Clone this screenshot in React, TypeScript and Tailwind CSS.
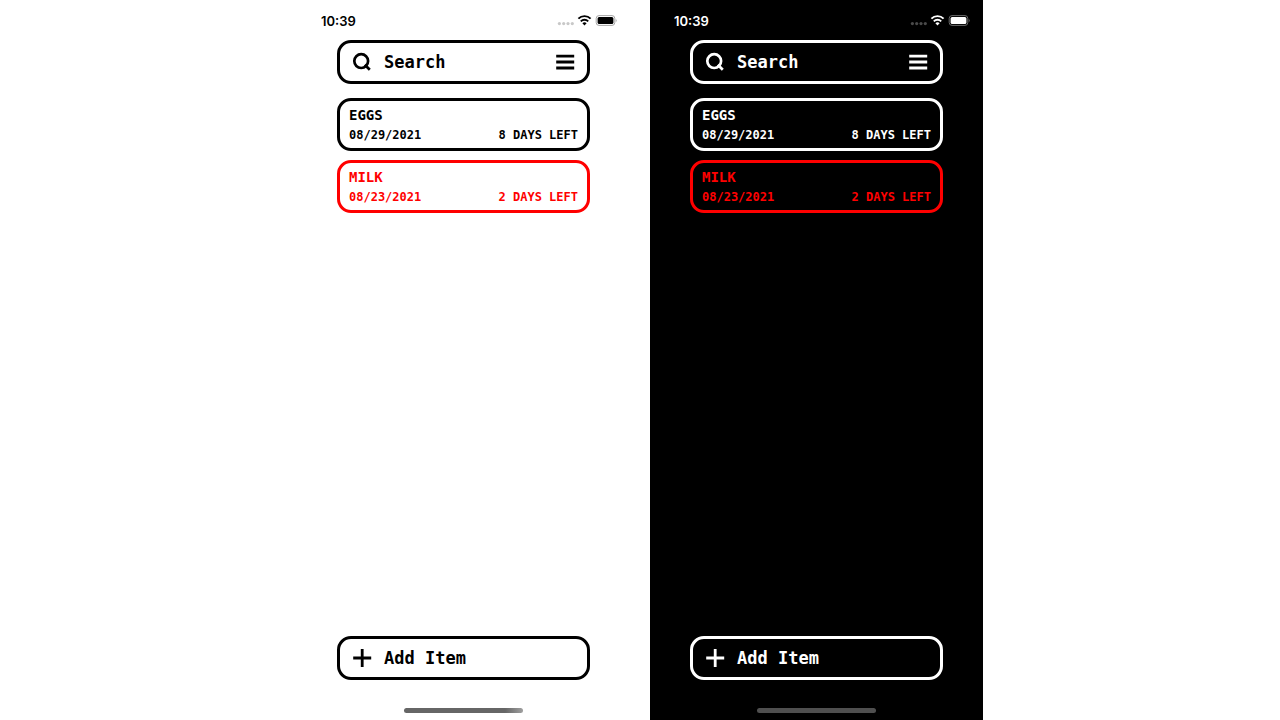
import { useId, useState } from "react";

type Theme = "light" | "dark";

interface Item {
  name: string;
  date: string;
  daysLeft: number;
}

const items: Item[] = [
  { name: "EGGS", date: "08/29/2021", daysLeft: 8 },
  { name: "MILK", date: "08/23/2021", daysLeft: 2 },
];

function StatusBar({ theme }: { theme: Theme }) {
  const muted = theme === "light" ? "#c8c8c8" : "#4a4a4a";
  const outline = theme === "light" ? "#a6a6a6" : "#6a6a6a";
  return (
    <header className="flex h-10 items-center justify-between pr-[13px] pl-6 font-['Inter',sans-serif] text-[13px] leading-5 font-semibold">
      <time className="pt-px">10:39</time>
      <svg width="60" height="12" viewBox="0 0 60 12" aria-hidden="true">
        <g fill={muted}>
          <circle cx="2.4" cy="9.6" r="1.6" />
          <circle cx="6.7" cy="9.6" r="1.6" />
          <circle cx="11" cy="9.6" r="1.6" />
          <circle cx="15.3" cy="9.6" r="1.6" />
        </g>
        <g fill="none" stroke="currentColor" strokeWidth="1.9">
          <path d="M21.4 4.7a8.5 8.5 0 0 1 12.2 0" />
          <path d="M23.8 7.3a5.2 5.2 0 0 1 7.4 0" />
        </g>
        <path d="M27.5 11.4 25.4 9.3a2.9 2.9 0 0 1 4.2 0z" fill="currentColor" />
        <rect x="39.2" y="1.6" width="18.6" height="9.8" rx="2.8" fill="none" stroke={outline} />
        <rect x="40.6" y="3" width="15.8" height="7" rx="1.5" fill="currentColor" />
        <path d="M58.8 4.9c1.2.5 1.2 2.7 0 3.2z" fill={outline} />
      </svg>
    </header>
  );
}

function SearchIcon() {
  return (
    <svg width="20" height="20" viewBox="0 0 20 20" fill="none" stroke="currentColor" strokeWidth="2.7" aria-hidden="true">
      <circle cx="9.2" cy="9.1" r="6.9" />
      <path d="m12.8 12.8 5 5" />
    </svg>
  );
}

function MenuIcon() {
  return (
    <svg width="20" height="20" viewBox="0 0 20 20" fill="none" stroke="currentColor" strokeWidth="2.8" aria-hidden="true">
      <path d="M1.2 4.1h18M1.2 10h18M1.2 16h18" />
    </svg>
  );
}

function PlusIcon() {
  return (
    <svg width="20" height="20" viewBox="0 0 20 20" fill="none" stroke="currentColor" strokeWidth="2.8" aria-hidden="true">
      <path d="M1.2 10h18M10.2 1v18" />
    </svg>
  );
}

function ItemCard({ item }: { item: Item }) {
  const urgent = item.daysLeft <= 3;
  return (
    <li className={`rounded-[14px] border-3 px-[9px] pt-1 pb-[3px] ${urgent ? "border-[#ff0000] text-[#ff0000]" : "border-current"}`}>
      <h2 className="text-[14px] leading-5">{item.name}</h2>
      <p className="flex justify-between text-[12px] leading-5">
        <span>{item.date}</span>
        <span>{item.daysLeft} DAYS LEFT</span>
      </p>
    </li>
  );
}

function Phone({ theme }: { theme: Theme }) {
  const searchId = useId();
  const [query, setQuery] = useState("");
  const visible = items.filter((item) => item.name.includes(query.toUpperCase()));
  return (
    <section className={`flex w-full max-w-[333px] flex-col ${theme === "light" ? "bg-white text-black" : "bg-black text-white"}`}>
      <StatusBar theme={theme} />
      <div className="flex grow flex-col px-10 font-['DejaVu_Sans_Mono',monospace] font-bold">
        <div className="flex h-11 items-center rounded-[14px] border-3 border-current px-3">
          <label htmlFor={searchId} aria-label="Search">
            <SearchIcon />
          </label>
          <input
            id={searchId}
            type="text"
            placeholder="Search"
            value={query}
            onChange={(event) => setQuery(event.target.value)}
            className="ml-3 min-w-0 grow bg-transparent text-[17px] leading-6 outline-none placeholder:text-current placeholder:opacity-100"
          />
          <button type="button" aria-label="Menu">
            <MenuIcon />
          </button>
        </div>
        <ul className="mt-[14px] flex flex-col gap-[9px]">
          {visible.map((item) => (
            <ItemCard key={item.name} item={item} />
          ))}
        </ul>
        <button type="button" className="mt-auto flex h-11 items-center gap-3 rounded-[14px] border-3 border-current px-3 text-[17px] leading-6">
          <PlusIcon />
          Add Item
        </button>
      </div>
      <footer className="flex h-10 items-end justify-center pb-[7px]">
        <div className={`h-[5px] w-[119px] rounded-full ${theme === "light" ? "bg-linear-to-r from-[#666666] from-85% to-[#a0a0a0]" : "bg-[#4f4f4f]"}`} />
      </footer>
    </section>
  );
}

export default function App() {
  return (
    <main className="flex min-h-screen justify-center gap-5 bg-white">
      <Phone theme="light" />
      <Phone theme="dark" />
    </main>
  );
}
